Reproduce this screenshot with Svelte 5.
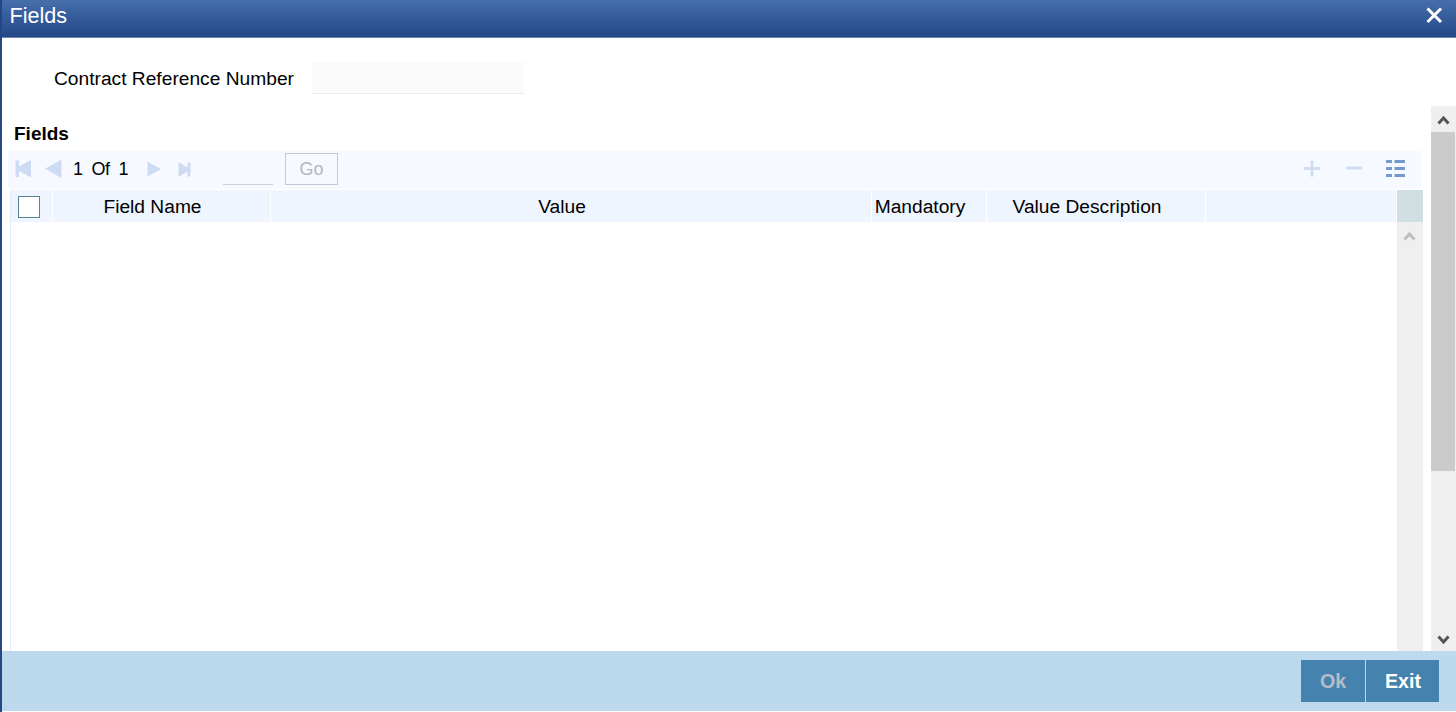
<script>
  const columns = [
    { label: 'Field Name', size: 'name' },
    { label: 'Value', size: 'value' },
    { label: 'Mandatory', size: 'mandatory' },
    { label: 'Value Description', size: 'description' },
  ]
  let reference = ''
  let page = 1
  let pages = 1
  let allSelected = false
</script>

<style>
  :global(body) {
    margin: 0;
    background: #fff;
  }
  * {
    box-sizing: border-box;
  }
  svg {
    display: block;
  }
  button {
    padding: 0;
    border: 0;
    background: none;
    font-family: inherit;
  }
  .window {
    display: flex;
    flex-direction: column;
    width: 1456px;
    height: 712px;
    border-left: 2px solid #244886;
    padding-bottom: 1px;
    overflow: hidden;
    background: #fff;
    color: #000;
    font: 19.2px/22px 'Liberation Sans', Arial, sans-serif;
  }
  header {
    display: flex;
    justify-content: space-between;
    height: 38px;
    padding: 4px 13px 0 7.5px;
    background: linear-gradient(#456fab, #244788);
    border-bottom: 1px solid #7286ab;
    color: #fff;
  }
  h1 {
    margin: 0;
    font-size: 21.6px;
    font-weight: normal;
    line-height: 24px;
  }
  .close {
    height: 17px;
    margin-top: 3px;
  }
  .reference {
    display: flex;
    height: 68px;
    padding: 24px 0 0 52px;
  }
  .reference label {
    width: 258px;
    line-height: 33px;
  }
  .reference input {
    width: 212px;
    height: 32px;
    border: 0;
    border-bottom: 1px solid #ebebeb;
    background: #fbfbfb;
  }
  .body {
    display: flex;
    flex: 1;
    min-height: 0;
  }
  .content {
    display: flex;
    flex-direction: column;
    width: 1429px;
    padding-left: 6px;
  }
  h2 {
    height: 45px;
    margin: 0;
    padding: 17px 0 0 6px;
    font-size: 19px;
    line-height: 22px;
  }
  .toolbar {
    display: flex;
    width: 1413px;
    height: 38px;
    padding-left: 7px;
    background: #f6f9ff;
    margin-bottom: 1px;
  }
  .pager {
    display: flex;
    align-items: center;
    height: 36px;
    font-size: 18px;
  }
  .pager svg {
    flex: none;
  }
  .count {
    width: 74px;
    padding-left: 9px;
    word-spacing: 4px;
    letter-spacing: -0.3px;
    white-space: nowrap;
  }
  .goto {
    width: 50px;
    height: 34px;
    margin-left: 31px;
    border: 0;
    border-bottom: 1px solid #ccd1dc;
    background: none;
  }
  .go {
    width: 53px;
    height: 32px;
    margin: 2px 0 0 12px;
    border: 1px solid #c3c7d6;
    color: #b4b6ba;
    font-size: 18px;
  }
  .actions {
    display: flex;
    margin-left: auto;
  }
  .table {
    display: flex;
    flex: 1;
    width: 1413px;
    margin-left: 2px;
  }
  .grid {
    width: 1387px;
    border-left: 1px solid #e8edf3;
  }
  .row {
    display: flex;
    height: 32px;
    background: #eef5ff;
    line-height: 33px;
  }
  .cell {
    border-right: 1px solid #fff;
    padding-right: 18px;
    text-align: center;
    white-space: nowrap;
  }
  .check {
    width: 42px;
    padding: 6px 0 0 7px;
  }
  .check input {
    display: block;
    width: 22px;
    height: 22px;
    margin: 0;
    appearance: none;
    border: 1px solid #538492;
    background: #fff;
  }
  .name {
    width: 218px;
  }
  .value {
    width: 601px;
  }
  .mandatory {
    width: 115px;
  }
  .description {
    width: 219px;
  }
  .rest {
    width: 191px;
    padding: 0;
  }
  .inner-scroll {
    width: 26px;
    background: #efefef;
  }
  .corner {
    height: 32px;
    background: #cfdfe1;
  }
  .outer-scroll {
    display: flex;
    flex-direction: column;
    justify-content: space-between;
    width: 25px;
    background: #efefef;
  }
  .thumb {
    width: 24px;
    height: 339px;
    background: #cbcbcb;
  }
  footer {
    display: flex;
    justify-content: flex-end;
    gap: 1px;
    height: 60px;
    padding: 9px 17px 9px 0;
    background: #bdd9ed;
  }
  footer button {
    background: #4682ae;
    color: #fff;
    font-size: 19.6px;
    font-weight: bold;
  }
  .ok {
    width: 64px;
    color: #b3bdc8;
  }
  .exit {
    width: 73px;
    padding-left: 1px;
  }
</style>

<div class="window">
  <header>
    <h1>Fields</h1>
    <button class="close" aria-label="Close">
      <svg width="17" height="17" viewBox="0 0 17 17">
        <path d="M1.500 1.500L15 15M15 1.500L1.500 15" stroke="#fff" stroke-width="3" />
      </svg>
    </button>
  </header>

  <div class="reference">
    <label for="reference">Contract Reference Number</label>
    <input id="reference" bind:value={reference} readonly />
  </div>

  <div class="body">
    <div class="content">
      <h2>Fields</h2>
      <div class="toolbar">
        <div class="pager">
          <svg width="49" height="36" fill="#cddcf3">
            <path d="M.5 9.500h3.500v6l12-6.500v17.500l-12-6.500v6h-3.500zM46.500 8.500v18.500l-16.500-9.300z" />
          </svg>
          <span class="count">{page} Of {pages}</span>
          <svg width="54" height="36" fill="#cddcf3">
            <path d="M9.500 10.500l13.500 7.500-13.500 7.500zM40.500 11l9 5.500v-5h3v14h-3v-5l-9 5.500z" />
          </svg>
        </div>
        <input class="goto" aria-label="Page" />
        <button class="go" disabled>Go</button>
        <div class="actions">
          <svg width="126" height="38">
            <path d="M9 17.500h16M17 9.500v16M51 17h16" stroke="#d0ddf2" stroke-width="3" />
            <path
              d="M91 10.500h6M99.500 10.500h10.500M91 17.500h6M99.500 17.500h10.500M91 24.500h6M99.500 24.500h10.500"
              stroke="#759aca"
              stroke-width="3" />
          </svg>
        </div>
      </div>
      <div class="table">
        <div class="grid">
          <div class="row">
            <div class="cell check">
              <input type="checkbox" aria-label="Select all" bind:checked={allSelected} />
            </div>
            {#each columns as { label, size }}
              <div class="cell {size}">{label}</div>
            {/each}
            <div class="cell rest"></div>
          </div>
        </div>
        <div class="inner-scroll">
          <div class="corner"></div>
          <svg width="26" height="28">
            <path d="M7.500 17.500l5-5.500 5 5.500" fill="none" stroke="#bdbdbd" stroke-width="3" />
          </svg>
        </div>
      </div>
    </div>
    <div class="outer-scroll">
      <div>
        <svg width="25" height="26">
          <path d="M7.500 17.500l5-5.500 5 5.500" fill="none" stroke="#555" stroke-width="3" />
        </svg>
        <div class="thumb"></div>
      </div>
      <svg width="25" height="26">
        <path d="M7.500 11.500l5 5.500 5-5.500" fill="none" stroke="#555" stroke-width="3" />
      </svg>
    </div>
  </div>

  <footer>
    <button class="ok" disabled>Ok</button>
    <button class="exit">Exit</button>
  </footer>
</div>
